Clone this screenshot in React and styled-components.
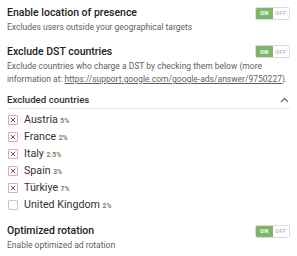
import React from "react";
import styled, { createGlobalStyle } from "styled-components";

const GlobalStyle = createGlobalStyle`
  body {
    margin: 0;
    background: #ffffff;
    font-family: Roboto, "Liberation Sans", sans-serif;
  }
`;

const countries = [
  { name: "Austria", rate: "5%", checked: true },
  { name: "France", rate: "2%", checked: true },
  { name: "Italy", rate: "2.5%", checked: true },
  { name: "Spain", rate: "3%", checked: true },
  { name: "Türkiye", rate: "7%", checked: true },
  { name: "United Kingdom", rate: "2%", checked: false },
];

const Toggle = ({ on }) => (
  <ToggleBox>
    <ToggleHalf $active={on}>ON</ToggleHalf>
    <ToggleHalf $active={!on}>OFF</ToggleHalf>
  </ToggleBox>
);

const Setting = ({ title, children, last }) => (
  <Section $last={last}>
    <Header>
      <Title>{title}</Title>
      <Toggle on />
    </Header>
    <Description>{children}</Description>
  </Section>
);

const App = () => {
  return (
    <>
      <GlobalStyle />
      <Page>
        <Setting title="Enable location of presence">
          Excludes users outside your geographical targets
        </Setting>
        <Setting title="Exclude DST countries">
          Exclude countries who charge a DST by checking them below (more
          information at:{" "}
          <Link>https://support.google.com/google-ads/answer/9750227</Link>).
        </Setting>
        <Group>
          <GroupHeader>
            <GroupTitle>Excluded countries</GroupTitle>
            <svg width="9" height="6" viewBox="0 0 9 6">
              <path
                d="M1 5 L4.5 1.5 L8 5"
                fill="none"
                stroke="#777"
                strokeWidth="1.4"
              />
            </svg>
          </GroupHeader>
          <List>
            {countries.map((c) => (
              <Row key={c.name}>
                <Check $checked={c.checked}>
                  {c.checked && (
                    <svg width="6" height="6" viewBox="0 0 6 6">
                      <path
                        d="M0.8 0.8 L5.2 5.2 M5.2 0.8 L0.8 5.2"
                        stroke="#74564a"
                        strokeWidth="1"
                      />
                    </svg>
                  )}
                </Check>
                <Name>{c.name}</Name>
                <Rate>{c.rate}</Rate>
              </Row>
            ))}
          </List>
        </Group>
        <Setting title="Optimized rotation" last>
          Enable optimized ad rotation
        </Setting>
      </Page>
    </>
  );
};

export default App;

const Page = styled.div`
  width: 297px;
  height: 256px;
  box-sizing: border-box;
  padding: 6px 7px 0 7px;
  display: flex;
  flex-direction: column;
  overflow: hidden;
`;

const Section = styled.div`
  display: flex;
  flex-direction: column;
  margin-bottom: ${(p) => (p.$last ? "0" : "10px")};
`;

const Header = styled.div`
  display: flex;
  align-items: center;
  justify-content: space-between;
  height: 14px;
`;

const Title = styled.div`
  font-size: 10.5px;
  font-weight: 500;
  color: #222;
  line-height: 14px;
`;

const Description = styled.div`
  font-size: 8.5px;
  line-height: 13.5px;
  color: #5f5f5f;
  margin-top: 1px;
`;

const Link = styled.span`
  text-decoration: underline;
`;

const ToggleBox = styled.div`
  display: flex;
  width: 35px;
  height: 13px;
  box-sizing: border-box;
  border: 1px solid #dcdcdc;
  border-radius: 2px;
  overflow: hidden;
`;

const ToggleHalf = styled.div`
  flex: 1;
  display: flex;
  align-items: center;
  justify-content: center;
  font-size: 5.8px;
  font-weight: 700;
  letter-spacing: 0.2px;
  background: ${(p) => (p.$active ? "#7db56b" : "#ffffff")};
  color: ${(p) => (p.$active ? "#ffffff" : "#c4c4c4")};
`;

const Group = styled.div`
  display: flex;
  flex-direction: column;
  margin-top: -4px;
  margin-bottom: 11px;
`;

const GroupHeader = styled.div`
  display: flex;
  align-items: center;
  justify-content: space-between;
  height: 14px;
  padding-right: 1px;
  padding-bottom: 1px;
  border-bottom: 1px solid #e6e6e6;
`;

const GroupTitle = styled.div`
  font-size: 9.7px;
  font-weight: 500;
  color: #333;
`;

const List = styled.div`
  display: flex;
  flex-direction: column;
  padding-top: 2.5px;
`;

const Row = styled.div`
  display: flex;
  align-items: center;
  height: 17px;
`;

const Check = styled.div`
  width: 10px;
  height: 10px;
  box-sizing: border-box;
  border: 1px solid ${(p) => (p.$checked ? "#e2a9a9" : "#c6c6c6")};
  border-radius: 1px;
  display: flex;
  align-items: center;
  justify-content: center;
  margin-left: 1px;
  margin-right: 6px;
`;

const Name = styled.span`
  font-size: 10.7px;
  color: #333;
`;

const Rate = styled.span`
  font-size: 6.8px;
  font-weight: 700;
  color: #8d7a5c;
  margin-left: 2.5px;
  margin-top: 3px;
`;
